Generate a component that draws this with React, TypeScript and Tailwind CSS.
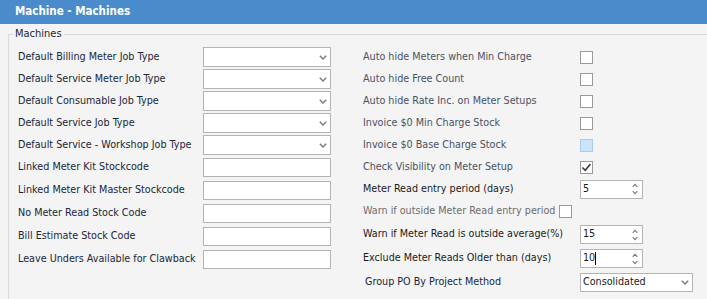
import React from "react";

const F = { fontFamily: '"DejaVu Sans Condensed", "Liberation Sans", sans-serif' };

function Chevron({ className = "" }: { className?: string }) {
  return (
    <svg width="8" height="5" viewBox="0 0 8 5" className={className}>
      <path d="M0.8 0.8 L4 4 L7.2 0.8" fill="none" stroke="#7a7a7a" strokeWidth="1.4" />
    </svg>
  );
}

function Select({ value = "", w = "w-[128px]", h = "h-[20px]" }: { value?: string; w?: string; h?: string }) {
  return (
    <div className={`${w} ${h} shrink-0 bg-white border border-[#b4b4b4] flex items-center justify-between pl-[2px] pr-[3px] text-[#1b1b1b]`}>
      <span>{value}</span>
      <Chevron />
    </div>
  );
}

function TextBox() {
  return <div className="w-[128px] h-[19px] shrink-0 bg-white border border-[#b4b4b4]" />;
}

function Check({ checked = false, hover = false }: { checked?: boolean; hover?: boolean }) {
  return (
    <div
      className={`w-[13px] h-[13px] shrink-0 border flex items-center justify-center ${
        hover ? "bg-[#cce4f7] border-[#a8cdee]" : "bg-white border-[#9a9a9a]"
      }`}
    >
      {checked && (
        <svg width="11" height="11" viewBox="0 0 11 11">
          <path d="M1.5 5.5 L4.2 8.2 L9.5 2" fill="none" stroke="#3a3a3a" strokeWidth="1.6" />
        </svg>
      )}
    </div>
  );
}

function Spin({ value, caret = false }: { value: string; caret?: boolean }) {
  return (
    <div className="w-[63px] h-[19px] shrink-0 bg-white border border-[#b4b4b4] flex items-center justify-between pl-[2px] pr-[4px] text-[#1b1b1b]">
      <span className="flex items-center">
        {value}
        {caret && <span className="inline-block w-[1px] h-[13px] bg-black" />}
      </span>
      <svg width="6" height="12" viewBox="0 0 6 12">
        <path d="M0.7 3.8 L3 1.3 L5.3 3.8" fill="none" stroke="#7a7a7a" strokeWidth="1.2" />
        <path d="M0.7 8.2 L3 10.7 L5.3 8.2" fill="none" stroke="#7a7a7a" strokeWidth="1.2" />
      </svg>
    </div>
  );
}

const leftSelects = [
  "Default Billing Meter Job Type",
  "Default Service Meter Job Type",
  "Default Consumable Job Type",
  "Default Service Job Type",
  "Default Service - Workshop Job Type",
];
const leftTexts = [
  "Linked Meter Kit Stockcode",
  "Linked Meter Kit Master Stockcode",
  "No Meter Read Stock Code",
  "Bill Estimate Stock Code",
  "Leave Unders Available for Clawback",
];

export default function App() {
  return (
    <div className="w-[707px] h-[299px] bg-[#f4f4f4] overflow-hidden text-[10.7px] whitespace-nowrap" style={F}>
      <div className="h-[24px] bg-[#4a8ccb] text-white font-bold text-[11.5px] pl-[15px] flex items-center">
        Machine - Machines
      </div>
      <fieldset className="ml-[8px] mt-[3px] border-t border-l border-[#dadada] h-[280px]">
        <legend className="ml-[4px] px-[2px] leading-[14px] text-[11px] text-[#1a2638]">Machines</legend>
        <div className="flex pl-[9px] pt-[5px]">
          <div className="w-[313px] shrink-0 flex flex-col text-[#1a2638]">
            {leftSelects.map((l) => (
              <div key={l} className="h-[22px] flex items-center justify-between">
                <span>{l}</span>
                <Select />
              </div>
            ))}
            {leftTexts.map((l) => (
              <div key={l} className="h-[23px] flex items-center justify-between">
                <span>{l}</span>
                <TextBox />
              </div>
            ))}
          </div>
          <div className="ml-[32px] flex flex-col">
            {[
              "Auto hide Meters when Min Charge",
              "Auto hide Free Count",
              "Auto hide Rate Inc. on Meter Setups",
              "Invoice $0 Min Charge Stock",
              "Invoice $0 Base Charge Stock",
              "Check Visibility on Meter Setup",
            ].map((l, i) => (
              <div key={l} className="h-[22px] flex items-center text-[#4a5262]">
                <span className="w-[217px] shrink-0">{l}</span>
                <Check hover={i === 4} checked={i === 5} />
              </div>
            ))}
            <div className="h-[22px] flex items-center text-[#1b1b1b]">
              <span className="w-[217px] shrink-0">Meter Read entry period (days)</span>
              <Spin value="5" />
            </div>
            <div className="h-[22px] flex items-center text-[#6d6d6d] gap-[4px]">
              <span>Warn if outside Meter Read entry period</span>
              <Check />
            </div>
            <div className="h-[25px] flex items-center text-[#1b1b1b]">
              <span className="w-[217px] shrink-0">Warn if Meter Read is outside average(%)</span>
              <Spin value="15" />
            </div>
            <div className="h-[23px] flex items-center text-[#1b1b1b]">
              <span className="w-[217px] shrink-0">Exclude Meter Reads Older than (days)</span>
              <Spin value="10" caret />
            </div>
            <div className="h-[24px] flex items-center text-[#1a2638]">
              <span className="w-[217px] shrink-0 pl-[2px]">Group PO By Project Method</span>
              <Select value="Consolidated" w="w-[113px]" h="h-[19px]" />
            </div>
          </div>
        </div>
      </fieldset>
    </div>
  );
}
